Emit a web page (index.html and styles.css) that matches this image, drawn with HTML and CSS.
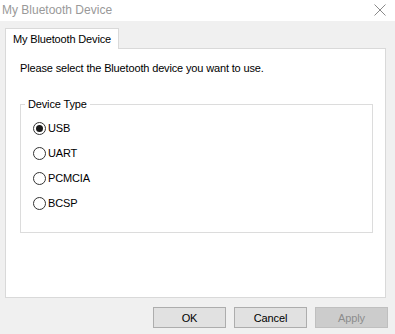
FILE: index.html
```html
<!DOCTYPE html>
<html lang="en">
<head>
  <meta charset="UTF-8">
  <title>My Bluetooth Device</title>
  <link rel="stylesheet" href="styles.css">
</head>
<body>
  <div class="window">
    <div class="titlebar">
      <span class="title">My Bluetooth Device</span>
      <svg class="close" width="12" height="12" viewBox="0 0 12 12">
        <path d="M0.5 0.5 L11.5 11.5 M11.5 0.5 L0.5 11.5" stroke="#8a8a8a" stroke-width="1" fill="none"/>
      </svg>
    </div>

    <div class="dialog">
      <div class="tabs">
        <div class="tab">My Bluetooth Device</div>
      </div>

      <div class="panel">
        <p class="intro">Please select the Bluetooth device you want to use.</p>

        <fieldset class="group">
          <legend>Device Type</legend>
          <label class="radio"><span class="dot checked"></span>USB</label>
          <label class="radio"><span class="dot"></span>UART</label>
          <label class="radio"><span class="dot"></span>PCMCIA</label>
          <label class="radio"><span class="dot"></span>BCSP</label>
        </fieldset>
      </div>

      <div class="buttons">
        <button class="btn">OK</button>
        <button class="btn">Cancel</button>
        <button class="btn disabled">Apply</button>
      </div>
    </div>
  </div>
</body>
</html>
```

FILE: styles.css
```css
* {
  margin: 0;
  padding: 0;
  box-sizing: border-box;
}

body {
  width: 395px;
  height: 334px;
  overflow: hidden;
  font-family: 'Liberation Sans', Arial, sans-serif;
  font-size: 11px;
  letter-spacing: -0.15px;
  color: #000;
  background: #f0f0f0;
}

.window {
  height: 334px;
  display: flex;
  flex-direction: column;
}

.titlebar {
  height: 21px;
  background: #fff;
  display: flex;
  align-items: center;
  justify-content: space-between;
  padding: 0 9px 2px 2px;
}

.title {
  color: #999;
  font-size: 12px;
  letter-spacing: 0;
}

.close {
  display: block;
}

.dialog {
  flex: 1;
  background: #f0f0f0;
  padding: 7px 7px 0 5px;
}

.tabs {
  display: flex;
  height: 20px;
}

.tab {
  width: 114px;
  height: 21px;
  background: #fff;
  border: 1px solid #d9d9d9;
  border-bottom: none;
  padding-left: 7px;
  line-height: 20px;
  white-space: nowrap;
  position: relative;
  z-index: 1;
}

.panel {
  width: 381px;
  height: 250px;
  background: #fff;
  border: 1px solid #d9d9d9;
  padding: 12px 13px 0 14px;
}

.intro {
  line-height: 14px;
  height: 14px;
}

.group {
  margin-top: 22px;
  width: 353px;
  height: 136px;
  border: 1px solid #dcdcdc;
  padding: 10px 0 0 0;
  display: flex;
  flex-direction: column;
  gap: 11px;
}

.group legend {
  margin-left: 4px;
  padding: 0 3px;
  line-height: 14px;
}

.radio {
  display: flex;
  align-items: center;
  gap: 2px;
  height: 14px;
  line-height: 14px;
  margin-left: 12px;
}

.dot {
  width: 13px;
  height: 13px;
  border: 1px solid #333;
  border-radius: 50%;
  display: flex;
  align-items: center;
  justify-content: center;
}

.dot.checked::after {
  content: '';
  width: 7px;
  height: 7px;
  border-radius: 50%;
  background: #1a1a1a;
}

.buttons {
  display: flex;
  justify-content: flex-end;
  gap: 8px;
  margin-top: 9px;
}

.btn {
  width: 73px;
  height: 21px;
  font-family: inherit;
  font-size: 11px;
  letter-spacing: -0.15px;
  background: #e1e1e1;
  border: 1px solid #adadad;
  color: #000;
}

.btn.disabled {
  background: #cccccc;
  border-color: #bfbfbf;
  color: #8c8c8c;
}
```
